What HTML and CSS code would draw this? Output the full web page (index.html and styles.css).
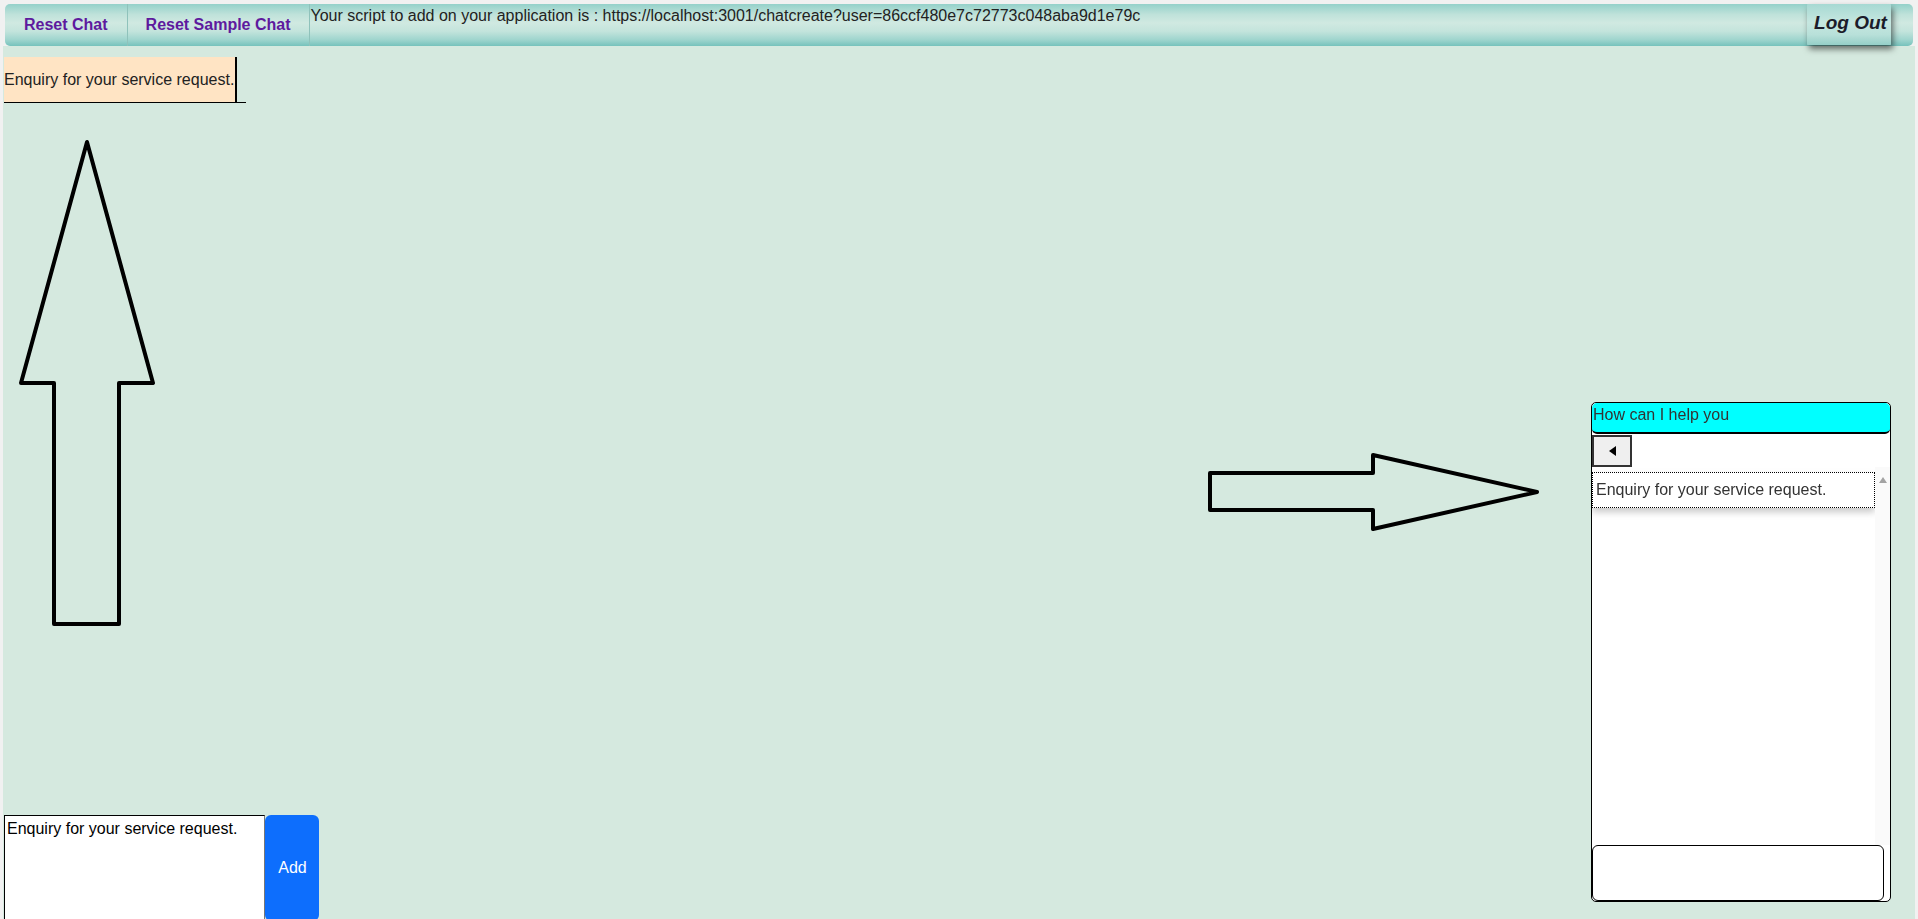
FILE: index.html
```html
<!DOCTYPE html>
<html lang="en">
<head>
<meta charset="utf-8">
<title>Chat Admin</title>
<link rel="stylesheet" href="styles.css">
</head>
<body>
<header class="topbar">
  <button class="nav-btn">Reset Chat</button>
  <button class="nav-btn">Reset Sample Chat</button>
  <span class="script-info">Your script to add on your application is : https://localhost:3001/chatcreate?user=86ccf480e7c72773c048aba9d1e79c</span>
  <button class="logout">Log Out</button>
</header>

<main class="workspace">
  <div class="preview-row">
    <span class="preview-item">Enquiry for your service request.</span>
  </div>
  <div class="canvas"></div>
  <form class="add-form">
    <textarea class="add-text">Enquiry for your service request.</textarea>
    <button type="button" class="add-btn">Add</button>
  </form>
</main>

<svg class="arrows" width="1918" height="919" viewBox="0 0 1918 919" xmlns="http://www.w3.org/2000/svg">
  <polygon points="87,142 153,383 119,383 119,624 54,624 54,383 21,383" fill="none" stroke="#000" stroke-width="4" stroke-linejoin="round"/>
  <polygon points="1210,473 1373,473 1373,455 1537,492 1373,529 1373,510 1210,510" fill="none" stroke="#000" stroke-width="4" stroke-linejoin="round"/>
</svg>

<aside class="chat-widget">
  <div class="cw-head">How can I help you</div>
  <button class="cw-back" type="button"><span class="tri-left"></span></button>
  <div class="cw-body">
    <div class="cw-list">
      <div class="cw-msg">Enquiry for your service request.</div>
    </div>
    <div class="cw-track"><span class="tri-up"></span></div>
  </div>
  <div class="cw-input"></div>
</aside>
</body>
</html>
```

FILE: styles.css
```css
html, body {
  margin: 0;
  padding: 0;
}
body {
  background: #f1f1f1;
  font-family: "Liberation Sans", Arial, sans-serif;
  font-size: 16px;
  overflow: hidden;
  width: 1918px;
  height: 919px;
  position: relative;
}

.topbar {
  margin: 4px 5px 0 5px;
  height: 42px;
  box-sizing: border-box;
  display: flex;
  align-items: stretch;
  border-radius: 5px;
  background: linear-gradient(to bottom, #94d1ca 0%, #bfe2da 25%, #d0e9e1 45%, #c3e4dc 65%, #9fd5ce 85%, #76c2bc 100%);
}
.nav-btn {
  background: transparent;
  border: none;
  border-right: 1px solid #8fc2bb;
  font-family: "Liberation Sans", Arial, sans-serif;
  font-weight: bold;
  font-size: 16px;
  color: #5e1a9e;
  padding: 0 19px 0 19px;
  cursor: pointer;
}
.nav-btn + .nav-btn {
  padding: 0 18px;
}
.script-info {
  color: #222;
  font-size: 16px;
  padding: 3px 0 0 1px;
  line-height: 18px;
  white-space: nowrap;
}
.logout {
  margin-left: auto;
  margin-right: 22px;
  width: 84px;
  height: 41px;
  border: none;
  border-radius: 1px;
  background: linear-gradient(to bottom, #a7d9d3 0%, #c6e7e0 45%, #b8e0d9 75%, #95cfc8 100%);
  box-shadow: 2px 4px 6px rgba(0, 0, 0, 0.55);
  font-family: "Liberation Sans", Arial, sans-serif;
  font-weight: bold;
  font-style: italic;
  font-size: 19px;
  color: #1c1c2a;
  padding: 0 0 4px 3px;
  cursor: pointer;
}

.workspace {
  margin: 0 3px;
  padding: 11px 0 0 1px;
  height: 875px;
  box-sizing: border-box;
  background: #d5e9df;
  display: flex;
  flex-direction: column;
}
.preview-row {
  width: 242px;
  border-bottom: 1px solid #000;
}
.preview-item {
  display: inline-block;
  background: #ffe4c4;
  border-right: 2px solid #000;
  height: 45px;
  line-height: 45px;
  color: #222;
  font-size: 16px;
  padding-right: 1px;
  vertical-align: top;
}
.canvas {
  flex: 1;
}
.add-form {
  display: flex;
  height: 106px;
  margin: 0;
}
.add-text {
  width: 261px;
  height: 106px;
  box-sizing: border-box;
  border: 1px solid #000;
  border-right-color: #777;
  padding: 4px 2px 2px 2px;
  margin: 0;
  font-family: "Liberation Sans", Arial, sans-serif;
  font-size: 16px;
  line-height: 18px;
  color: #000;
  background: #fff;
  resize: none;
}
.add-btn {
  width: 54px;
  height: 106px;
  border: none;
  border-radius: 6px;
  background: #0d6efd;
  color: #fff;
  font-family: "Liberation Sans", Arial, sans-serif;
  font-size: 16px;
  padding: 0 0 0 1px;
  margin: 0;
}

.arrows {
  position: absolute;
  left: 0;
  top: 0;
  pointer-events: none;
}

.chat-widget {
  position: fixed;
  right: 27px;
  bottom: 17px;
  width: 300px;
  height: 500px;
  box-sizing: border-box;
  border: 1px solid #000;
  border-radius: 5px;
  background: #fff;
  display: flex;
  flex-direction: column;
  overflow: hidden;
}
.cw-head {
  height: 31px;
  box-sizing: border-box;
  background: #00ffff;
  border-bottom: 2px solid #000;
  border-radius: 5px;
  color: #333;
  font-size: 16px;
  line-height: 18px;
  padding: 3px 0 0 1px;
  flex: none;
}
.cw-back {
  flex: none;
  margin-top: 1px;
  width: 40px;
  height: 32px;
  box-sizing: border-box;
  border: 2px solid #333;
  background: #efefef;
  padding: 0;
  display: flex;
  align-items: center;
  justify-content: center;
}
.tri-left {
  width: 0;
  height: 0;
  border-top: 5px solid transparent;
  border-bottom: 5px solid transparent;
  border-right: 7px solid #000;
}
.cw-body {
  flex: 1;
  display: flex;
  min-height: 0;
}
.cw-list {
  flex: 1;
  padding-top: 5px;
}
.cw-msg {
  height: 36px;
  box-sizing: border-box;
  border: 1px dotted #000;
  background: #fff;
  box-shadow: 0 4px 7px rgba(0, 0, 0, 0.22);
  color: #333;
  font-size: 16px;
  line-height: 34px;
  padding-left: 3px;
}
.cw-track {
  width: 15px;
  background: #fafafa;
  display: flex;
  justify-content: center;
  padding-top: 10px;
  box-sizing: border-box;
}
.tri-up {
  width: 0;
  height: 0;
  border-left: 4px solid transparent;
  border-right: 4px solid transparent;
  border-bottom: 6px solid #a3a3a3;
}
.cw-input {
  flex: none;
  height: 56px;
  width: 292px;
  box-sizing: border-box;
  border: 1px solid #000;
  border-radius: 6px;
  background: #fff;
}
```
